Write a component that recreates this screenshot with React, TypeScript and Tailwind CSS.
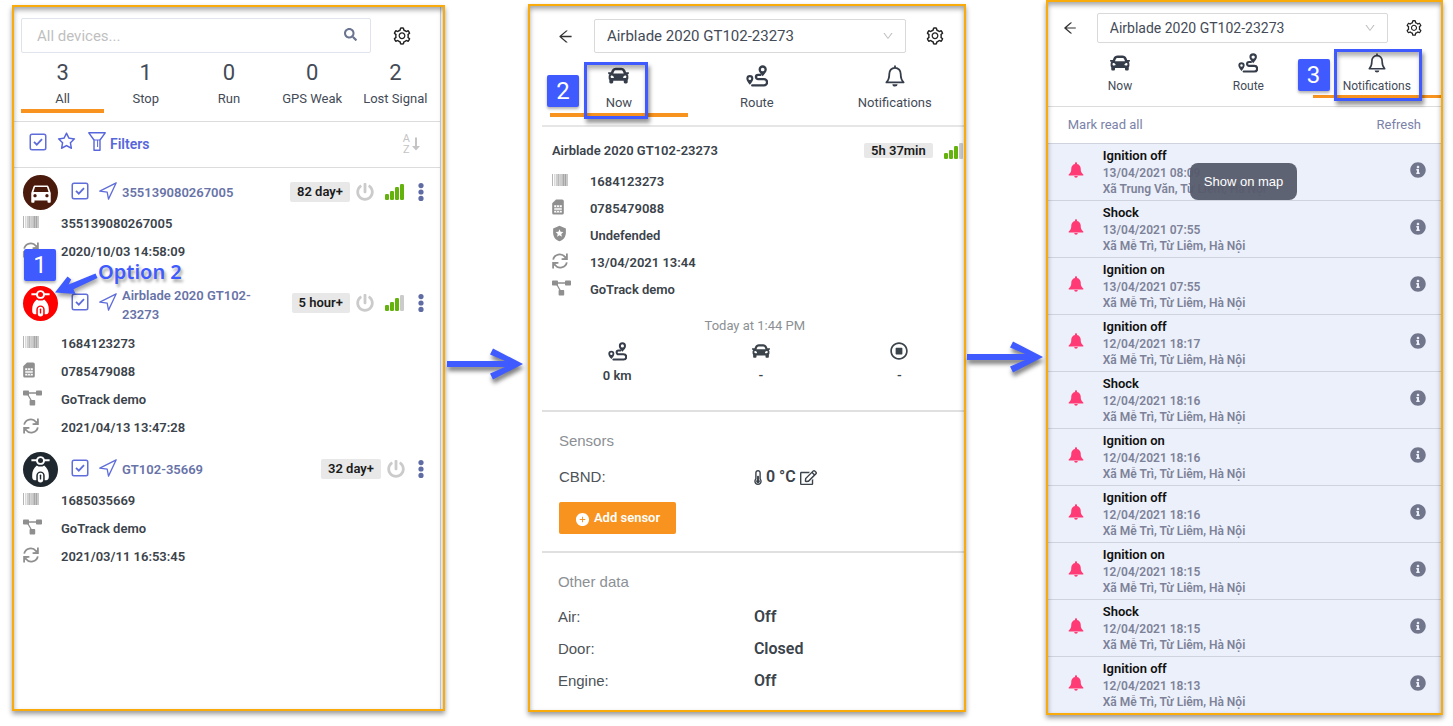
import React from "react";
import {
  AiFillPlusCircle,
  AiOutlineArrowLeft,
  AiOutlineDown,
  AiOutlineSetting,
  AiOutlineStar,
} from "react-icons/ai";
import {
  FaCar,
  FaInfoCircle,
  FaPowerOff,
  FaRegEdit,
  FaRegStopCircle,
  FaSearch,
  FaThermometerHalf,
} from "react-icons/fa";
import { MdDirectionsCar, MdLocalPolice } from "react-icons/md";

/* ---------- Icons ---------- */

function BarcodeIcon() {
  return (
    <svg viewBox="0 0 16 12" className="h-3 w-4">
      <rect x="0" width="1" height="12" fill="#b5b5b5" />
      <rect x="2" width="1.5" height="12" fill="#dadada" />
      <rect x="4" width="2" height="12" fill="#cfcfcf" />
      <rect x="6" width="1.5" height="12" fill="#b9b9b9" />
      <rect x="7.5" width="2.9" height="12" fill="#cccccc" />
      <rect x="10.4" width="1.6" height="12" fill="#a8a8a8" />
      <rect x="12" width="1" height="12" fill="#c4c4c4" />
      <rect x="13" width="1" height="12" fill="#a5a5a5" />
      <rect x="14" width="0.6" height="12" fill="#d0d0d0" />
      <rect x="14.6" width="1" height="12" fill="#a5a5a5" />
    </svg>
  );
}

function SimIcon() {
  return (
    <svg viewBox="0 0 12 16" className="h-4 w-3">
      <path d="M4 0.5h6.2a1.6 1.6 0 0 1 1.6 1.6v11.8a1.6 1.6 0 0 1-1.6 1.6H1.8a1.6 1.6 0 0 1-1.6-1.6V4.3z" fill="#8f8f8f" />
      <path d="M2.2 6.2h7.6v2H2.2zM2.2 9.2h7.6v1.6H2.2zM2.2 11.8h7.6v1.6H2.2z" fill="#fff" />
      <path d="M4.6 6.2v2M7.4 6.2v2M4.6 11.8v1.6M7.4 11.8v1.6" stroke="#8f8f8f" strokeWidth="0.8" />
    </svg>
  );
}

function GroupIcon() {
  return (
    <svg viewBox="0 0 19 16" className="h-4 w-[19px]" fill="#8f8f8f">
      <rect x="0" y="0.5" width="6" height="5" rx="0.8" />
      <rect x="13" y="0.5" width="6" height="5" rx="0.8" />
      <rect x="6.6" y="10" width="5.6" height="5.5" rx="0.8" />
      <path d="M5 3h9M4.5 4l4 7" stroke="#8f8f8f" strokeWidth="1.3" />
    </svg>
  );
}

function SyncIcon() {
  return (
    <svg viewBox="0 0 16 16" className="size-4" fill="none" stroke="#8f8f8f" strokeWidth="1.8">
      <path d="M1.2 6.6A6.6 6.4 0 0 1 13 4" />
      <path d="M14.8 9.4A6.6 6.4 0 0 1 3 12" />
      <path d="M14.9 0.6v5.6H9.6M1.1 15.4V9.8h5.3" />
      <path d="M11.6 5.6h2.6V3zM4.4 10.4H1.8V13z" fill="#8f8f8f" strokeWidth="0.6" />
    </svg>
  );
}

function ShieldIcon() {
  return <MdLocalPolice className="-ml-px size-[17px] text-[#8f8f8f]" />;
}

function SignalIcon({ level }: { level: number }) {
  const bars = [6, 9, 13, 16];
  return (
    <svg viewBox="0 0 20 16" className="h-4 w-5 shrink-0" role="img" aria-label="Signal">
      {bars.map((h, i) => (
        <rect key={h} x={i * 5} y={16 - h} width="4" height={h} rx="1.2" fill={i < level ? "#64b20c" : "#cbcbcb"} />
      ))}
    </svg>
  );
}

function NavigationIcon() {
  return (
    <svg viewBox="0 0 18 18" className="size-[18px]" fill="none" stroke="#5f6ddb" strokeWidth="1.3" strokeLinejoin="round">
      <path d="M17.2 0.8L0.8 9.2l7.4 0.9 1.3 7z" />
    </svg>
  );
}

function RouteIcon({ className }: { className: string }) {
  return (
    <svg viewBox="0 0 24 24" className={className} fill="#363d4a">
      <path
        fillRule="evenodd"
        d="M18.2 0.4a4.5 4.5 0 0 1 4.5 4.5c0 2.3-2.3 5-4.5 7.3-2.2-2.3-4.5-5-4.5-7.3a4.5 4.5 0 0 1 4.5-4.5zm0 2.5a2 2 0 1 0 0 4 2 2 0 0 0 0-4z"
      />
      <path
        fillRule="evenodd"
        d="M4.2 11a3.8 3.8 0 0 1 3.8 3.8c0 2.1-1.8 4.6-3.8 6.8-2-2.2-3.8-4.7-3.8-6.8A3.8 3.8 0 0 1 4.2 11zm0 2.4a1.5 1.5 0 1 0 0 3 1.5 1.5 0 0 0 0-3z"
      />
      <path
        d="M15.6 10.8h-2.4a2.3 2.3 0 0 0 0 4.6h6.4a3.4 3.4 0 0 1 0 6.8H6.8"
        fill="none"
        stroke="#363d4a"
        strokeWidth="2.6"
        strokeLinecap="round"
      />
    </svg>
  );
}

function BellOutlineIcon({ className }: { className: string }) {
  return (
    <svg viewBox="0 0 20 22" className={className} fill="none" stroke="#363d4a" strokeWidth="1.8" strokeLinejoin="round">
      <path d="M10 2.8c3.6 0 5.7 2.8 5.7 6.2 0 4 .8 6.3 2.9 8.4H1.4c2.1-2.1 2.9-4.4 2.9-8.4 0-3.4 2.1-6.2 5.7-6.2z" />
      <path d="M10 0.4v2.4" />
      <path d="M7.4 19.3h5.2a2.6 2.3 0 0 1-5.2 0z" fill="#363d4a" stroke="none" />
    </svg>
  );
}

function BellFilledIcon() {
  return (
    <svg viewBox="0 0 16 16" className="size-4" fill="#ff3a75">
      <path d="M8 0.3c.6 0 1 .4 1 1v.6c2.3.5 3.7 2.4 3.7 4.7 0 3 .6 4.4 2.6 6v.8H0.7v-.8c2-1.6 2.6-3 2.6-6 0-2.3 1.4-4.2 3.7-4.7v-.6c0-.6.4-1 1-1zM6.2 14.1h3.600a1.800 1.600 0 0 1-3.600 0z" />
    </svg>
  );
}

function FilterIcon() {
  return (
    <svg viewBox="0 0 18 19" className="h-[19px] w-[18px]" fill="none" stroke="#5866dc" strokeWidth="1.4" strokeLinejoin="round">
      <path d="M0.8 0.8h16.4L12 8v10.2H6V8z" />
      <path d="M6 8h6M9.6 8v7" strokeWidth="1" />
    </svg>
  );
}

function SortIcon() {
  return (
    <span className="flex items-center gap-0.5 text-[#c4c4c4]">
      <span className="flex flex-col items-center text-[11px] leading-[11px]">
        <span>A</span>
        <span>Z</span>
      </span>
      <svg viewBox="0 0 8 14" className="h-3.5 w-2" fill="currentColor">
        <path d="M3 0.500h2v8.500h3L4 13.500 0 9h3z" />
      </svg>
    </span>
  );
}

function ScooterIcon() {
  return (
    <svg viewBox="0 0 35 35" className="size-[35px]" fill="#fff">
      <path d="M8.4 7.2h4.8a4.6 4.6 0 0 1 8.6 0h4.8v2h-4.600a4.600 4.600 0 0 1-9 0H8.400z" />
      <circle cx="17.500" cy="8.600" r="2.500" className="fill-current" />
      <path d="M13.800 13.400c1 .8 2.300 1.200 3.700 1.200s2.700-.4 3.700-1.200c3 2.300 4.600 5.800 4.600 9.600v2c0 2-.9 3.200-2.600 3.200h-1.500v-4.500a4.200 4.200 0 0 0-8.400 0v4.500h-1.500c-1.700 0-2.600-1.200-2.600-3.200v-2c0-3.800 1.600-7.300 4.600-9.600z" />
      <path d="M17.500 20.800a2.700 2.700 0 0 1 2.700 2.700v4.300a2.700 2.700 0 0 1-5.400 0v-4.300a2.700 2.700 0 0 1 2.700-2.700z" />
      <rect x="16.800" y="22.600" width="1.400" height="5" rx="0.700" className="fill-current" />
    </svg>
  );
}

function FlowArrow() {
  return (
    <svg viewBox="0 0 76 34" className="h-[34px] w-[76px] shrink-0 drop-shadow-[1px_4px_2px_rgba(0,0,0,0.5)]" fill="#3f5bff" aria-hidden="true">
      <path d="M0 13h58L43 6.500l3-6L76 16 46 31.500l-3-6L58 19H0z" />
    </svg>
  );
}

/* ---------- Shared parts ---------- */

function Panel({ className, label, children }: { className: string; label: string; children: React.ReactNode }) {
  return (
    <section
      aria-label={label}
      className={`relative min-w-0 border-2 border-[#f9ab0c] shadow-[0_3px_5px_rgba(0,0,0,0.4)] ${className}`}
    >
      {children}
      <span className="pointer-events-none absolute inset-0 shadow-[inset_0_3px_5px_rgba(0,0,0,0.35)]" />
    </section>
  );
}

function StepBadge({ n, className }: { n: number; className: string }) {
  return (
    <span
      className={`absolute z-10 flex size-8 items-center justify-center rounded-xs bg-[#3f5bff] text-2xl text-white shadow-[0_2px_3px_rgba(0,0,0,0.3)] ${className}`}
    >
      {n}
    </span>
  );
}

function TickBox({ label }: { label: string }) {
  return (
    <label className="relative flex size-4 shrink-0">
      <input
        type="checkbox"
        defaultChecked
        aria-label={label}
        className="peer size-4 appearance-none rounded-xs border border-[#5f6ddb] bg-white ring-[0.5px] ring-[#5f6ddb]"
      />
      <svg viewBox="0 0 16 16" className="pointer-events-none absolute inset-0 hidden size-4 peer-checked:block" fill="none" stroke="#5f6ddb" strokeWidth="1.8">
        <path d="M4 7.800l2.800 2.800 5.200-5.400" />
      </svg>
    </label>
  );
}

type InfoKind = "barcode" | "sim" | "group" | "sync" | "shield";

const infoIcons: Record<InfoKind, React.ReactNode> = {
  barcode: <BarcodeIcon />,
  sim: <SimIcon />,
  group: <GroupIcon />,
  sync: <SyncIcon />,
  shield: <ShieldIcon />,
};

function InfoRow({ kind, text, height }: { kind: InfoKind; text: string; height: string }) {
  return (
    <li className={`flex items-center ${height}`}>
      <span className="flex w-[38px] shrink-0 pb-1">{infoIcons[kind]}</span>
      <span>{text}</span>
    </li>
  );
}

function Duration({ text }: { text: string }) {
  return <span className="rounded-xs bg-[#e8e8e8] px-[7px] text-[13px] leading-5 font-semibold whitespace-nowrap text-[#1b1b1b]">{text}</span>;
}

/* ---------- Device list ---------- */

const counters = [
  { count: 3, label: "All" },
  { count: 1, label: "Stop" },
  { count: 0, label: "Run" },
  { count: 0, label: "GPS Weak" },
  { count: 2, label: "Lost Signal" },
];

interface Device {
  name: string;
  avatar: React.ReactNode;
  avatarColor: string;
  duration: string;
  signal?: number;
  spacing: string;
  info: [InfoKind, string][];
  marker?: React.ReactNode;
}

const optionMarker = (
  <>
    <StepBadge n={1} className="-top-[37px] left-px" />
    <svg viewBox="0 0 44 26" className="absolute -top-3.5 left-8 z-10 h-[26px] w-11 drop-shadow-[1px_3px_2px_rgba(0,0,0,0.4)]" fill="#3f5bff" aria-hidden="true">
      <path d="M40.500 1.500l2 4.600L18.500 17.200l2 4.800L0 20.500 12.500 4.500l3.700 3-2.600 5z" />
    </svg>
    <span className="absolute -top-7 left-[75px] z-10 font-['Noto_Sans',sans-serif] text-xl leading-7 font-semibold whitespace-nowrap text-[#3f5bff] [text-shadow:2px_3px_3px_rgba(0,0,0,0.35)]">
      Option 2
    </span>
  </>
);

const devices: Device[] = [
  {
    name: "355139080267005",
    avatar: <MdDirectionsCar className="size-[26px] text-white" />,
    avatarColor: "bg-[#4a1a0c] text-[#4a1a0c]",
    duration: "82 day+",
    signal: 4,
    spacing: "pb-5",
    info: [
      ["barcode", "355139080267005"],
      ["sync", "2020/10/03 14:58:09"],
    ],
  },
  {
    name: "Airblade 2020 GT102-23273",
    avatar: <ScooterIcon />,
    avatarColor: "bg-[#fe0000] text-[#fe0000]",
    duration: "5 hour+",
    signal: 3,
    spacing: "pb-2.5",
    info: [
      ["barcode", "1684123273"],
      ["sim", "0785479088"],
      ["group", "GoTrack demo"],
      ["sync", "2021/04/13 13:47:28"],
    ],
    marker: optionMarker,
  },
  {
    name: "GT102-35669",
    avatar: <ScooterIcon />,
    avatarColor: "bg-[#1f272f] text-[#1f272f]",
    duration: "32 day+",
    spacing: "pb-2.5",
    info: [
      ["barcode", "1685035669"],
      ["group", "GoTrack demo"],
      ["sync", "2021/03/11 16:53:45"],
    ],
  },
];

function DeviceItem({ device }: { device: Device }) {
  return (
    <li className={`relative pr-[15px] pl-[9px] ${device.spacing}`}>
      <div className="relative flex items-start">
        {device.marker}
        <span className={`flex size-[35px] shrink-0 items-center justify-center rounded-full ${device.avatarColor}`}>{device.avatar}</span>
        <span className="mt-2 ml-3.5">
          <TickBox label={`Select ${device.name}`} />
        </span>
        <span className="mt-[7px] ml-[11px] shrink-0">
          <NavigationIcon />
        </span>
        <a
          href="#device"
          className={`ml-[5px] w-[138px] shrink-0 text-[13px] leading-[19px] font-semibold text-[#6873a8] ${
            device.marker ? "pb-1.5" : "pt-2"
          }`}
        >
          {device.name}
        </a>
        <span className="mt-[7px] ml-auto flex items-center">
          <Duration text={device.duration} />
          <button type="button" aria-label="Power" className="ml-1.5 text-[#cbcbcb]">
            <FaPowerOff className="size-[18px]" />
          </button>
          {device.signal && (
            <span className="ml-[11px] flex">
              <SignalIcon level={device.signal} />
            </span>
          )}
          <button type="button" aria-label="More" className="ml-3">
            <svg viewBox="0 0 8 18" className="h-[18px] w-2" fill="#5f6ba3">
              <circle cx="4" cy="2.600" r="2.600" />
              <circle cx="4" cy="9" r="2.600" />
              <circle cx="4" cy="15.400" r="2.600" />
            </svg>
          </button>
        </span>
      </div>
      <ul className="text-[13px] font-semibold text-[#3b434b]">
        {device.info.map(([kind, text]) => (
          <InfoRow key={text} kind={kind} text={text} height="h-7" />
        ))}
      </ul>
    </li>
  );
}

function DeviceListPanel() {
  return (
    <Panel label="Devices" className="mt-[5px] mb-1 flex-[433]">
      <div className="mr-0.5 h-full border-r border-[#cfcfcf] pt-[11px]">
        <div className="flex items-center px-[7px]">
          <div className="relative w-[350px]">
            <input
              type="search"
              aria-label="Search devices"
              placeholder="All devices..."
              className="h-[35px] w-full rounded-xs border border-[#dfe3ec] pr-9 pl-[15px] text-[15px] placeholder:text-[#bfbfbf]"
            />
            <FaSearch className="absolute top-2.5 right-3.5 size-[13px] text-[#6b7491]" />
          </div>
          <button type="button" aria-label="Settings" className="ml-[21px]">
            <AiOutlineSetting className="size-5 text-[#222]" />
          </button>
        </div>

        <div className="grid grid-cols-5 border-b border-[#dcdcdc] pr-[3px] pb-2 pl-[7px]">
          {counters.map((c, i) => (
            <button
              key={c.label}
              type="button"
              className={`flex min-w-0 flex-col items-center border-b-4 pt-[5px] text-[#444b57] ${i === 0 ? "border-[#f7931e]" : "border-transparent"}`}
            >
              <span className="text-[22px] leading-[30px]">{c.count}</span>
              <span className="text-[13px] leading-[21px] whitespace-nowrap">{c.label}</span>
            </button>
          ))}
        </div>

        <div className="flex h-[46px] items-center border-b border-[#dcdcdc] pr-5 pb-1.5 pl-4">
          <TickBox label="Select all" />
          <button type="button" aria-label="Favourites" className="ml-2.5 text-[#5866dc]">
            <AiOutlineStar className="size-[21px]" />
          </button>
          <button type="button" className="ml-[11px] flex items-center gap-1 text-sm font-semibold text-[#5866dc]">
            <FilterIcon />
            <span className="pt-1">Filters</span>
          </button>
          <button type="button" aria-label="Sort" className="ml-auto pt-1">
            <SortIcon />
          </button>
        </div>

        <ul className="pt-[7px]">
          {devices.map((d) => (
            <DeviceItem key={d.name} device={d} />
          ))}
        </ul>
      </div>
    </Panel>
  );
}

/* ---------- Device detail header ---------- */

function DevicePicker({ id, size }: { id: string; size: string }) {
  return (
    <div className="relative flex-1">
      <select id={id} aria-label="Device" className={`w-full appearance-none rounded-xs border border-[#d9d9d9] bg-white pr-8 pl-3 text-[#444b57] ${size}`}>
        <option>Airblade 2020 GT102-23273</option>
      </select>
      <span className="pointer-events-none absolute inset-y-0 right-3 flex items-center">
        <AiOutlineDown className="size-3 text-[#bdbdbd]" />
      </span>
    </div>
  );
}

const details: [InfoKind, string][] = [
  ["barcode", "1684123273"],
  ["sim", "0785479088"],
  ["shield", "Undefended"],
  ["sync", "13/04/2021 13:44"],
  ["group", "GoTrack demo"],
];

const otherData = [
  ["Air:", "Off"],
  ["Door:", "Closed"],
  ["Engine:", "Off"],
];

function NowPanel() {
  const tab = "relative flex flex-col items-center border-b-4 pt-3 text-[13px] text-[#444b57]";
  return (
    <Panel label="Now" className="mt-1 mb-[3px] flex-[438]">
      <div className="pt-[13px] pl-3">
        <div className="flex items-center pr-[19px] pl-[15px]">
          <button type="button" aria-label="Back" className="mr-5">
            <AiOutlineArrowLeft className="size-[17px] text-[#333]" />
          </button>
          <DevicePicker id="now-device" size="h-[34px] text-[15px]" />
          <button type="button" aria-label="Settings" className="ml-[19px]">
            <AiOutlineSetting className="size-5 text-[#222]" />
          </button>
        </div>

        <div className="grid grid-cols-3 border-b-2 border-[#e6e6e6] pb-2 pl-2">
          <button type="button" className={`${tab} border-[#f7931e]`}>
            <FaCar className="size-[21px] text-[#363d4a]" />
            <span className="mt-1.5 leading-[21px]">Now</span>
            <StepBadge n={2} className="top-[22px] -left-[3px]" />
            <span className="absolute top-[9px] left-[34px] z-10 h-[57px] w-16 border-3 border-[#3f5bff] shadow-[2px_4px_4px_rgba(0,0,0,0.4),inset_1px_4px_4px_rgba(0,0,0,0.3)]" />
          </button>
          <button type="button" className={`${tab} border-transparent`}>
            <RouteIcon className="size-[22px]" />
            <span className="mt-[5px] leading-[21px]">Route</span>
          </button>
          <button type="button" className={`${tab} border-transparent`}>
            <BellOutlineIcon className="h-[22px] w-5" />
            <span className="mt-[5px] leading-[21px]">Notifications</span>
          </button>
        </div>

        <div className="pl-2.5">
          <div className="flex items-center pt-3.5 text-[13px] font-semibold text-[#3b434b]">
            <h2>Airblade 2020 GT102-23273</h2>
            <span className="mr-[11px] ml-auto">
              <Duration text="5h 37min" />
            </span>
            <SignalIcon level={3} />
          </div>
          <ul className="pt-[7px] pb-px text-[13px] font-semibold text-[#3b434b]">
            {details.map(([kind, text]) => (
              <InfoRow key={text} kind={kind} text={text} height="h-[27px]" />
            ))}
          </ul>
        </div>

        <p className="pt-3 pl-1 text-center text-[13px] leading-5 text-[#8c9094]">Today at 1:44 PM</p>
        <div className="grid grid-cols-3 border-b-2 border-[#e0e0e0] pt-1.5 pb-6 pl-1.5 text-[13px] font-semibold text-[#3b434b]">
          <div className="flex flex-col items-center">
            <RouteIcon className="size-[19px]" />
            <span className="mt-[5px] leading-5">0 km</span>
          </div>
          <div className="flex flex-col items-center pl-2.5">
            <FaCar className="size-[18px]" />
            <span className="mt-1.5 leading-5">-</span>
          </div>
          <div className="flex flex-col items-center pl-2.5">
            <FaRegStopCircle className="size-[18px]" />
            <span className="mt-1.5 leading-5">-</span>
          </div>
        </div>

        <div className="border-b-2 border-[#e0e0e0] pt-[18px] pb-[17px] pl-[17px] font-['Liberation_Sans',Arial,sans-serif] text-[15px] leading-[22px] text-[#4d5358]">
          <h3 className="text-[#8c9094]">Sensors</h3>
          <div className="flex pt-3.5">
            <span className="w-[195px]">CBND:</span>
            <span className="flex items-center font-['Roboto',sans-serif] text-base leading-[22px] font-semibold text-[#3b434b]">
              <FaThermometerHalf className="mr-1 h-[15px] w-2" />0 °C
              <button type="button" aria-label="Edit sensor" className="ml-1">
                <FaRegEdit className="size-[17px]" />
              </button>
            </span>
          </div>
          <button
            type="button"
            className="mt-3.5 flex h-8 items-center rounded-xs bg-[#f7931e] px-4 font-['Roboto',sans-serif] text-[13px] font-semibold text-white"
          >
            <AiFillPlusCircle className="mt-0.5 mr-1 size-[15px]" />
            Add sensor
          </button>
        </div>

        <div className="pt-[18px] pl-4 font-['Liberation_Sans',Arial,sans-serif] text-[15px] text-[#4d5358]">
          <h3 className="pb-2 leading-[22px] text-[#8c9094]">Other data</h3>
          <dl>
            {otherData.map(([name, value]) => (
              <div key={name} className="flex h-8 items-center">
                <dt className="w-[196px]">{name}</dt>
                <dd className="font-['Roboto',sans-serif] text-base font-semibold text-[#3b434b]">{value}</dd>
              </div>
            ))}
          </dl>
        </div>
      </div>
    </Panel>
  );
}

/* ---------- Notifications ---------- */

const notifications = [
  ["Ignition off", "13/04/2021 08:09", "Xã Trung Văn, Từ Liêm, Hà Nội"],
  ["Shock", "13/04/2021 07:55", "Xã Mễ Trì, Từ Liêm, Hà Nội"],
  ["Ignition on", "13/04/2021 07:55", "Xã Mễ Trì, Từ Liêm, Hà Nội"],
  ["Ignition off", "12/04/2021 18:17", "Xã Mễ Trì, Từ Liêm, Hà Nội"],
  ["Shock", "12/04/2021 18:16", "Xã Mễ Trì, Từ Liêm, Hà Nội"],
  ["Ignition on", "12/04/2021 18:16", "Xã Mễ Trì, Từ Liêm, Hà Nội"],
  ["Ignition off", "12/04/2021 18:16", "Xã Mễ Trì, Từ Liêm, Hà Nội"],
  ["Ignition on", "12/04/2021 18:15", "Xã Mễ Trì, Từ Liêm, Hà Nội"],
  ["Shock", "12/04/2021 18:15", "Xã Mễ Trì, Từ Liêm, Hà Nội"],
  ["Ignition off", "12/04/2021 18:13", "Xã Mễ Trì, Từ Liêm, Hà Nội"],
];

function NotificationsPanel() {
  const tab = "relative flex flex-col items-center border-b-3 pt-2.5 text-xs text-[#444b57]";
  return (
    <Panel label="Notifications" className="flex-[397]">
      <div className="pt-[11px]">
        <div className="flex items-center pr-[18px] pl-3.5">
          <button type="button" aria-label="Back" className="mr-[19px]">
            <AiOutlineArrowLeft className="size-4 text-[#333]" />
          </button>
          <DevicePicker id="notifications-device" size="h-[30px] text-sm" />
          <button type="button" aria-label="Settings" className="ml-[17px]">
            <AiOutlineSetting className="size-[18px] text-[#222]" />
          </button>
        </div>

        <div className="grid grid-cols-3 border-b border-[#dcdcdc] pb-2 pl-2">
          <button type="button" className={`${tab} border-transparent`}>
            <FaCar className="size-5 text-[#363d4a]" />
            <span className="mt-1 leading-[18px]">Now</span>
          </button>
          <button type="button" className={`${tab} border-transparent`}>
            <RouteIcon className="size-5" />
            <span className="mt-1 leading-[18px]">Route</span>
          </button>
          <button type="button" className={`${tab} border-[#f7931e]`}>
            <BellOutlineIcon className="h-5 w-[18px]" />
            <span className="mt-1 leading-[18px]">Notifications</span>
            <StepBadge n={3} className="top-4 -left-[15px]" />
            <span className="absolute top-1.5 left-[21px] z-10 h-[52px] w-[88px] border-3 border-[#3f5bff] shadow-[2px_4px_4px_rgba(0,0,0,0.4),inset_1px_4px_4px_rgba(0,0,0,0.3)]" />
          </button>
        </div>

        <div className="flex h-9 items-center justify-between px-5 text-[13px] text-[#7b82a8]">
          <button type="button">Mark read all</button>
          <button type="button">Refresh</button>
        </div>

        <ul className="bg-[#ecf0fa]">
          {notifications.map(([title, time, place], i) => (
            <li key={i} className="relative flex h-[57px] items-center border-t border-[#cfd3dd] pr-[15px] pl-5">
              <span className="mb-1">
                <BellFilledIcon />
              </span>
              <div className="ml-[19px] pb-px font-semibold">
                <p className="text-[13px] leading-[18px] text-[#111]">{title}</p>
                <p className="text-xs leading-4 text-[#7d8299]">{time}</p>
                <p className="text-xs leading-4 text-[#7d8299]">{place}</p>
              </div>
              <button type="button" aria-label="Details" className="mb-1 ml-auto text-[#72768c]">
                <FaInfoCircle className="size-4" />
              </button>
              {i === 0 && (
                <span
                  role="tooltip"
                  className="absolute top-[19px] left-[142px] z-10 flex h-[37px] items-center rounded-lg bg-[#565b6c]/95 px-3.5 font-['Liberation_Sans',Arial,sans-serif] text-[13px] whitespace-nowrap text-white"
                >
                  Show on map
                </span>
              )}
            </li>
          ))}
        </ul>
      </div>
    </Panel>
  );
}

export default function App() {
  return (
    <main className="flex min-h-screen items-start bg-white font-['Roboto',sans-serif]">
      <div className="flex min-w-0 flex-1 items-stretch pr-2.5 pl-3">
        <DeviceListPanel />
        <div className="flex w-[83px] shrink-0 items-center pt-3.5 pl-0.5">
          <FlowArrow />
        </div>
        <NowPanel />
        <div className="flex w-20 shrink-0 items-center pl-px">
          <FlowArrow />
        </div>
        <NotificationsPanel />
      </div>
    </main>
  );
}
